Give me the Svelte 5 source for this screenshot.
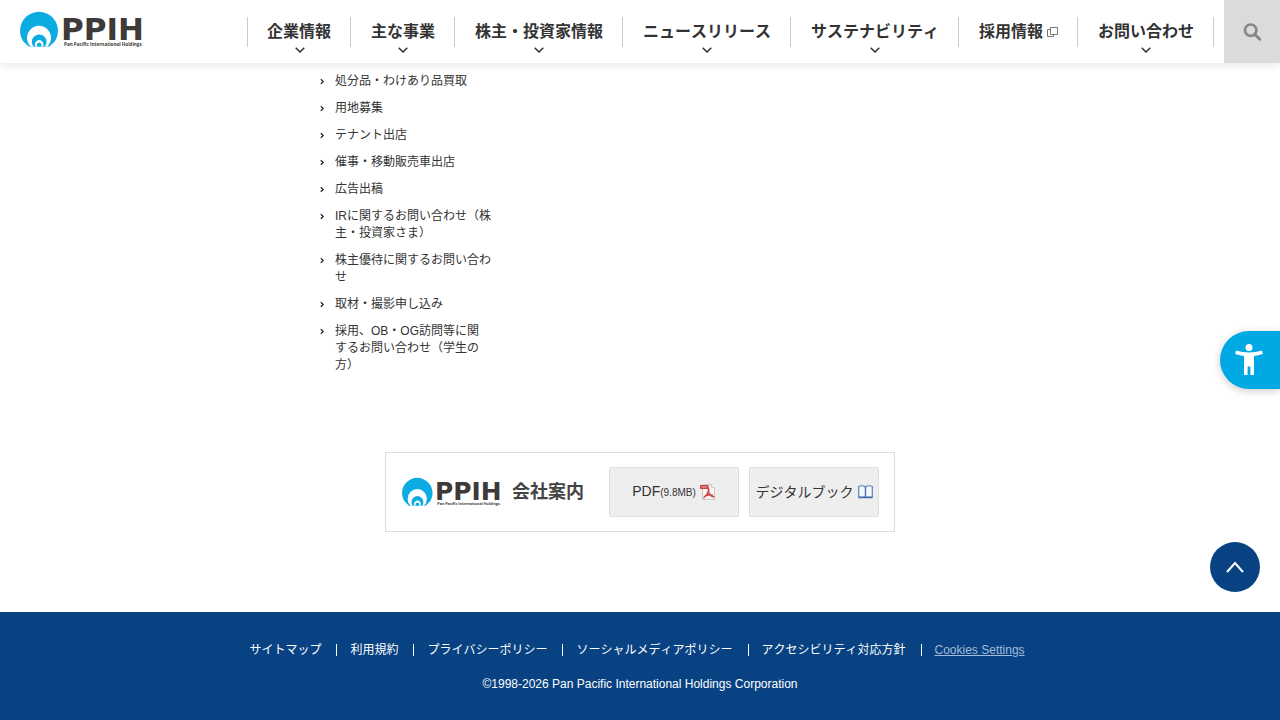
<script>
  const navItems = [
    { label: '企業情報' },
    { label: '主な事業' },
    { label: '株主・投資家情報' },
    { label: 'ニュースリリース' },
    { label: 'サステナビリティ' },
    { label: '採用情報', external: true },
    { label: 'お問い合わせ' },
  ];

  const contactLinks = [
    '処分品・わけあり品買取',
    '用地募集',
    'テナント出店',
    '催事・移動販売車出店',
    '広告出稿',
    'IRに関するお問い合わせ（株主・投資家さま）',
    '株主優待に関するお問い合わせ',
    '取材・撮影申し込み',
    '採用、OB・OG訪問等に関\nするお問い合わせ（学生の方）',
  ];

  const footerLinks = [
    'サイトマップ',
    '利用規約',
    'プライバシーポリシー',
    'ソーシャルメディアポリシー',
    'アクセシビリティ対応方針',
  ];
</script>

{#snippet logo()}
  <svg class="logo" viewBox="0 0 122 36" role="img" aria-label="PPIH">
    <path d="M8.3 34.5A19 19 0 1 1 29.7 34.5Z" fill="#0cace3" />
    <path d="M10.7 34.5A12 12 0 1 1 27.3 34.5Z" fill="#fff" />
    <path d="M13.4 34.5A7.4 7.4 0 1 1 25 34.5Z" fill="#0cace3" />
    <path d="M15.6 34.5A4.2 4.2 0 1 1 22.8 34.5Z" fill="#fff" />
    <path d="M17.3 34.5A2.4 2.4 0 1 1 21.1 34.5Z" fill="#0cace3" />
    <path d="M4 30.5L8.5 35M34 30.5L29.5 35" stroke="#fff" stroke-width="1" />
    <text x="41" y="28" class="logo-name">PPIH</text>
    <text x="44" y="34" class="logo-sub">Pan Pacific International Holdings</text>
  </svg>
{/snippet}

<header>
  <a class="brand" href="#top">{@render logo()}</a>
  <nav>
    <ul>
      {#each navItems as item}
        <li>
          <a href="#nav">
            {item.label}
            {#if item.external}
              <svg class="external" width="11" height="10" viewBox="0 0 11 10" fill="none" stroke="#777">
                <path d="M3.5 .5h7v7h-7z" />
                <path d="M3.5 2.5h-3v7h6v-2" />
              </svg>
            {:else}
              <svg class="arrow" width="10" height="6" viewBox="0 0 10 6" fill="none" stroke="#333" stroke-width="1.5">
                <path d="M.7 .7L5 5L9.3 .7" />
              </svg>
            {/if}
          </a>
        </li>
      {/each}
    </ul>
  </nav>
  <button class="search" aria-label="検索">
    <svg width="18" height="18" viewBox="0 0 18 18" fill="none" stroke="#888" stroke-width="2.6">
      <circle cx="7.7" cy="7.2" r="5.7" />
      <path d="M11.8 11.3L16.7 16.2" stroke-width="3" stroke-linecap="round" />
    </svg>
  </button>
</header>

<main>
  <ul class="contact">
    {#each contactLinks as link}
      <li>
        <svg width="5" height="7" viewBox="0 0 5 7" fill="none" stroke="#222" stroke-width="1.2">
          <path d="M.8 1.2L3.2 3.5L.8 5.8" />
        </svg>
        <a href="#contact">{link}</a>
      </li>
    {/each}
  </ul>

  <section class="guide">
    {@render logo()}
    <h2>会社案内</h2>
    <a class="guide-btn" href="#pdf">
      <span>PDF<small>(9.8MB)</small></span>
      <svg width="16" height="16" viewBox="0 0 16 16">
        <path d="M2.5 .5h9l3 3v12h-12z" fill="#f7f3f2" stroke="#d3c6c4" />
        <path d="M11.5 .5v3h3" fill="#fff" stroke="#d3c6c4" />
        <path d="M0 1h8.5v4H0z" fill="#cc4444" />
        <path d="M1.5 3h5.5" stroke="#eab0b0" />
        <path d="M8 3.5C9.5 6 8 10 3.5 14M8.5 8C9.5 11 11 12.5 14.5 13M5 12C7.5 10.5 10 10.5 13 11.5" fill="none" stroke="#cc4444" stroke-width="1.6" />
      </svg>
    </a>
    <a class="guide-btn" href="#book">
      <span>デジタルブック</span>
      <svg width="15" height="14" viewBox="0 0 15 14">
        <path d="M.7 1.5C3 .5 5.5 .5 7.5 2C9.5 .5 12 .5 14.3 1.5V12H.7Z" fill="#f4f8fc" stroke="#5a80b5" stroke-width="1.2" />
        <path d="M7.5 2v10M.5 12.5h14" stroke="#466fa8" stroke-width="1.4" />
      </svg>
    </a>
  </section>
</main>

<footer>
  <ul>
    {#each footerLinks as link}
      <li><a href="#footer">{link}</a></li>
    {/each}
    <li><a class="cookies" href="#cookies">Cookies Settings</a></li>
  </ul>
  <p>©1998-2026 Pan Pacific International Holdings Corporation</p>
</footer>

<button class="accessibility" aria-label="アクセシビリティ">
  <svg width="28" height="32" viewBox="0 0 28 32" fill="#fff">
    <circle cx="14" cy="3.5" r="3.5" />
    <path d="M1 6.5Q14 10.5 27 6.5L27.8 10Q23 11.5 19 12V31H15.4V22.5H12.6V31H9V12Q5 11.5 .2 10Z" />
  </svg>
</button>

<a class="page-top" href="#top" aria-label="ページトップへ">
  <svg width="18" height="12" viewBox="0 0 18 12" fill="none" stroke="#fff" stroke-width="2">
    <path d="M1 11L9 2L17 11" />
  </svg>
</a>

<style>
  :global(body) {
    background: #fff;
    color: #333;
    font-family: "Liberation Sans", "Noto Sans CJK JP", sans-serif;
    font-size: 12px;
    line-height: 17px;
    font-kerning: none;
  }

  ul {
    margin: 0;
    padding: 0;
    list-style: none;
  }

  a {
    color: inherit;
    text-decoration: none;
  }

  svg {
    display: block;
    flex: none;
  }

  header {
    position: sticky;
    top: 0;
    z-index: 1;
    display: flex;
    align-items: center;
    height: 63px;
    background: #fff;
    box-shadow: 0 2px 8px rgba(0, 0, 0, 0.1);
  }

  .brand {
    margin: 0 auto 4px 20px;
  }

  .logo {
    width: 122px;
    overflow: visible;
  }

  .logo-name {
    fill: #3e3a39;
    font: 700 31px "DejaVu Sans", sans-serif;
  }

  .logo-sub {
    fill: #3e3a39;
    font: 700 4.6px "Open Sans", sans-serif;
  }

  nav {
    margin-right: 10px;
  }

  nav ul {
    display: flex;
    border-left: 1px solid #ccc;
  }

  nav li {
    border-right: 1px solid #ccc;
  }

  nav a {
    position: relative;
    display: flex;
    align-items: center;
    gap: 4px;
    padding: 0 19px 0 20px;
    font-size: 16px;
    font-weight: 700;
    line-height: 30px;
    white-space: nowrap;
  }

  nav li:first-child a {
    padding-left: 19px;
  }

  .arrow {
    position: absolute;
    left: 50%;
    bottom: -6px;
    margin-left: -4px;
  }

  .search {
    display: flex;
    align-items: center;
    justify-content: center;
    width: 56px;
    height: 100%;
    padding: 0;
    border: 0;
    background: #dbdbdb;
    cursor: pointer;
  }

  .contact {
    width: 171px;
    margin-left: 25%;
    padding-top: 10px;
    white-space: pre-line;
  }

  .contact li {
    display: flex;
    gap: 10px;
    margin-bottom: 10px;
  }

  .contact svg {
    margin-top: 5px;
  }

  .guide {
    display: flex;
    align-items: center;
    box-sizing: border-box;
    max-width: 510px;
    height: 80px;
    margin: 78px auto 80px;
    padding: 0 15px 0 16px;
    border: 1px solid #ddd;
  }

  .guide .logo {
    width: 98px;
  }

  .guide h2 {
    margin: 0 auto 0 12px;
    color: #444;
    font-size: 18px;
    font-weight: 700;
  }

  .guide-btn {
    display: flex;
    align-items: center;
    justify-content: center;
    gap: 4px;
    box-sizing: border-box;
    width: 130px;
    height: 50px;
    border: 1px solid #ddd;
    border-radius: 2px;
    background: #eee;
    font-size: 14px;
  }

  .guide-btn + .guide-btn {
    margin-left: 10px;
  }

  .guide-btn small {
    font-size: 10px;
  }

  footer {
    padding: 29px 0 27px;
    background: #084282;
    color: #fff;
    line-height: 18px;
    text-align: center;
  }

  footer ul {
    display: flex;
    justify-content: center;
    padding-right: 6px;
  }

  footer li {
    display: flex;
    align-items: center;
  }

  footer li + li::before {
    content: "";
    height: 12px;
    margin: 0 13px 0 15px;
    border-left: 1px solid #fff;
  }

  footer p {
    margin: 16px 0 0;
  }

  .cookies {
    color: #a3bbd9;
    text-decoration: underline;
  }

  .accessibility {
    position: fixed;
    top: 50%;
    right: 0;
    width: 60px;
    height: 58px;
    margin-top: -29px;
    padding: 0 0 0 15px;
    border: 0;
    border-radius: 29px 0 0 29px;
    background: #00a8e4;
    box-shadow: 0 2px 8px rgba(0, 0, 0, 0.2);
    cursor: pointer;
  }

  .page-top {
    position: fixed;
    right: 20px;
    bottom: 128px;
    display: flex;
    align-items: center;
    justify-content: center;
    width: 50px;
    height: 50px;
    border-radius: 50%;
    background: #084282;
  }
</style>
